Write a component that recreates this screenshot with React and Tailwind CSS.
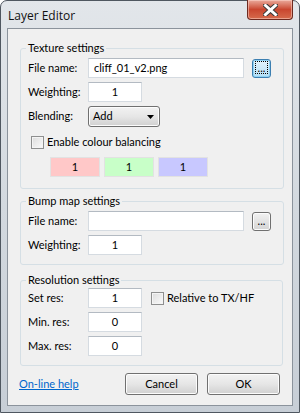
import React from 'react'

// Windows 7 style "Layer Editor" dialog

const TextBox = ({ value = '', center = false, className = '' }) => (
  <div
    className={`h-[20px] bg-white border border-[#d5dbe1] border-t-[#b3bac2] flex items-center px-[5px] ${
      center ? 'justify-center' : ''
    } ${className}`}
  >
    {value}
  </div>
)

const Row = ({ label, children, className = '' }) => (
  <div className={`flex items-center h-[20px] ${className}`}>
    <span className="w-[60px] shrink-0">{label}</span>
    {children}
  </div>
)

const CheckBox = () => (
  <div className="w-[13px] h-[13px] border border-[#8e8f8f] bg-gradient-to-br from-[#dcdcdc] to-[#fbfbfb] shadow-[inset_0_0_0_1px_#f4f4f4] shrink-0" />
)

const BrowseButton = ({ focused = false }) => (
  <div
    className={`ml-[8px] w-[19px] h-[19px] rounded-[3px] border flex items-end justify-center leading-[12px] pb-[3px] ${
      focused
        ? 'border-[#3c7fb1] bg-gradient-to-b from-[#e5f4fc] to-[#b3dff6] shadow-[inset_0_0_0_1px_#8fd2f4]'
        : 'border-[#707070] bg-gradient-to-b from-[#f2f2f2] to-[#d4d4d4] shadow-[inset_0_0_0_1px_#fcfcfc]'
    }`}
  >
    {focused ? (
      <div className="w-[13px] h-[13px] border border-dotted border-black flex items-end justify-center leading-[10px]">
        ...
      </div>
    ) : (
      '...'
    )}
  </div>
)

const Button = ({ children }) => (
  <div className="w-[73px] h-[22px] rounded-[3px] border border-[#707070] bg-gradient-to-b from-[#f2f2f2] via-[#e6e6e6] to-[#d0d0d0] shadow-[inset_0_0_0_1px_#fcfcfc] flex items-center justify-center">
    {children}
  </div>
)

const Group = ({ title, children, className = '' }) => (
  <fieldset className={`ml-[12px] mr-[9px] border border-[#d5dfe5] rounded-[3px] pl-[7px] pr-[12px] ${className}`}>
    <legend className="-ml-[2px] px-[2px] leading-[16px]">{title}</legend>
    {children}
  </fieldset>
)

export default function App() {
  return (
    <div className="w-[300px] h-[413px] font-['Lato',sans-serif] text-[11px] text-black">
      <div className="relative w-full h-full flex flex-col border border-[#4f5760] rounded-t-[7px] bg-gradient-to-b from-[#e2e6ea] via-[#d3d9df] to-[#c7ced6] px-[6px] pb-[6px]">
        {/* title bar */}
        <div className="h-[27px] flex items-center pl-[1px] pt-[2px] font-['Open_Sans',sans-serif] text-[12px] text-[#111]">
          Layer Editor
        </div>

        {/* close button */}
        <div className="absolute -top-[1px] right-[6px] w-[46px] h-[20px] rounded-b-[4px] border border-t-0 border-[#6d2a20] bg-gradient-to-b from-[#e9a99b] via-[#c9462f] to-[#d66a4c] shadow-[inset_0_0_0_1px_rgba(255,220,210,0.5)] flex items-center justify-center">
          <svg width="15" height="12" viewBox="0 0 15 12">
            <path d="M2.5 1.5 L12.5 10.5 M12.5 1.5 L2.5 10.5" stroke="#3a3a3a" strokeWidth="5" strokeLinecap="square" />
            <path d="M2.5 1.5 L12.5 10.5 M12.5 1.5 L2.5 10.5" stroke="#ffffff" strokeWidth="3" strokeLinecap="square" />
          </svg>
        </div>

        {/* client area */}
        <div className="flex-1 border border-[#8b939c] bg-[#f0f0f0] flex flex-col">
          <Group title="Texture settings" className="mt-[11px] pb-[11px]">
            <Row label="File name:" className="mt-[2px]">
              <TextBox value="cliff_01_v2.png" className="w-[156px]" />
              <BrowseButton focused />
            </Row>
            <Row label="Weighting:" className="mt-[4px]">
              <TextBox value="1" center className="w-[54px]" />
            </Row>
            <Row label="Blending:" className="mt-[4px] h-[21px]">
              <div className="w-[72px] h-[21px] rounded-[3px] border border-[#707070] bg-gradient-to-b from-[#f2f2f2] via-[#e6e6e6] to-[#d0d0d0] shadow-[inset_0_0_0_1px_#fcfcfc] flex items-center justify-between pl-[4px] pr-[5px]">
                <span>Add</span>
                <svg width="7" height="4" viewBox="0 0 7 4">
                  <path d="M0 0 H7 L3.5 4 Z" fill="#000" />
                </svg>
              </div>
            </Row>
            <div className="mt-[9px] flex items-center h-[13px] pl-[3px] gap-[3px]">
              <CheckBox />
              <span>Enable colour balancing</span>
            </div>
            <div className="mt-[8px] ml-[22px] flex gap-[4px]">
              <div className="w-[50px] h-[20px] border border-[#e2e2e2] bg-[#ffc8c8] flex items-center justify-center">1</div>
              <div className="w-[50px] h-[20px] border border-[#e2e2e2] bg-[#c8ffc8] flex items-center justify-center">1</div>
              <div className="w-[50px] h-[20px] border border-[#e2e2e2] bg-[#c8c8ff] flex items-center justify-center">1</div>
            </div>
          </Group>

          <Group title="Bump map settings" className="mt-[4px] pb-[9px]">
            <Row label="File name:" className="mt-[2px]">
              <TextBox className="w-[156px]" />
              <BrowseButton />
            </Row>
            <Row label="Weighting:" className="mt-[4px]">
              <TextBox value="1" center className="w-[54px]" />
            </Row>
          </Group>

          <Group title="Resolution settings" className="mt-[7px] pb-[9px]">
            <Row label="Set res:">
              <TextBox value="1" center className="w-[54px]" />
              <div className="ml-[9px] flex items-center gap-[3px]">
                <CheckBox />
                <span>Relative to TX/HF</span>
              </div>
            </Row>
            <Row label="Min. res:" className="mt-[4px]">
              <TextBox value="0" center className="w-[54px]" />
            </Row>
            <Row label="Max. res:" className="mt-[4px]">
              <TextBox value="0" center className="w-[54px]" />
            </Row>
          </Group>

          <div className="mt-[7px] pl-[11px] pr-[12px] flex items-center">
            <span className="text-[#0066cc] underline">On-line help</span>
            <div className="ml-auto flex gap-[9px]">
              <Button>Cancel</Button>
              <Button>OK</Button>
            </div>
          </div>
        </div>
      </div>
    </div>
  )
}
